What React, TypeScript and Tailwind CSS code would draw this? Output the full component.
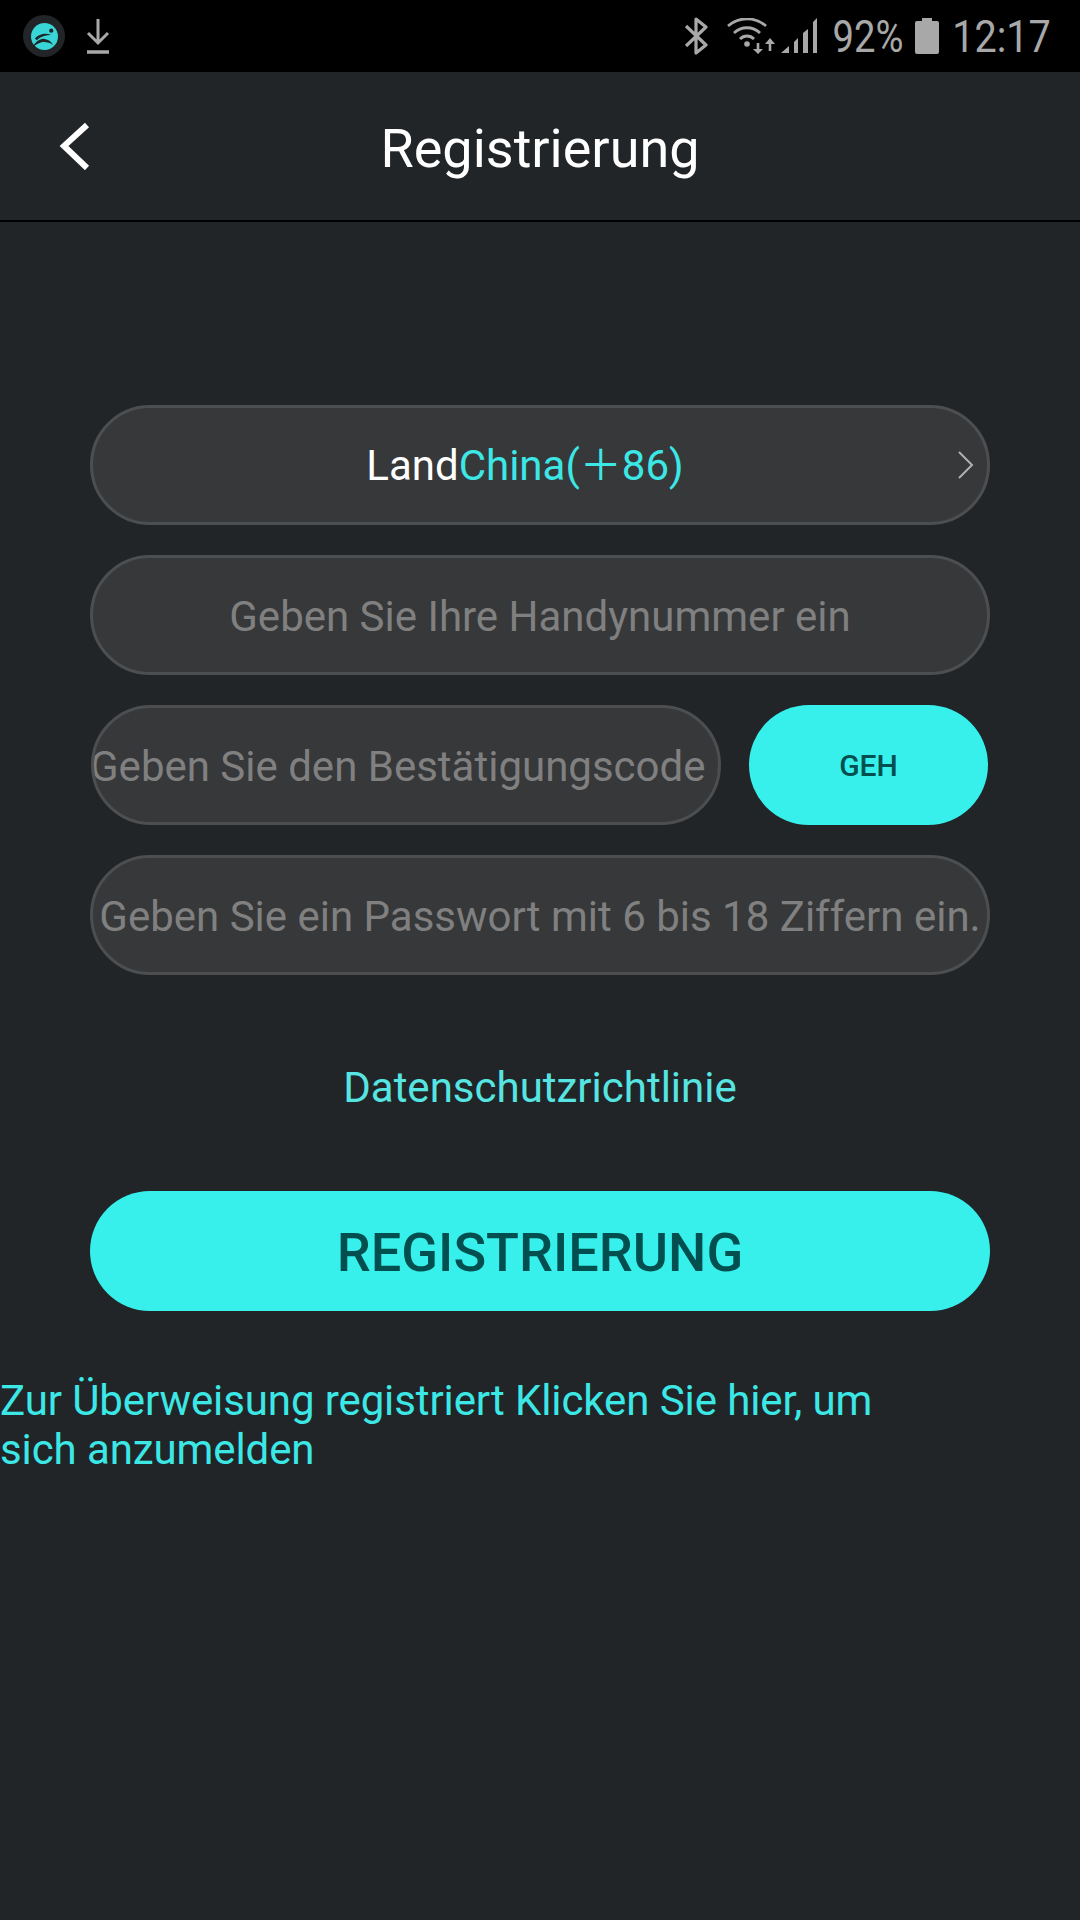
export default function App() {
  const pill = "h-[120px] rounded-[60px] border-[3px] border-[#4d4e50] bg-[#37383a] overflow-hidden flex items-center text-[42px] whitespace-nowrap pt-[3px]";
  return (
    <div className="w-[1080px] h-[1920px] bg-[#212528] flex flex-col font-['Roboto',sans-serif]">
      <div className="h-[72px] bg-black flex items-center shrink-0 text-[#a8a8a8]">
        <div className="ml-[23px] w-[42px] h-[42px] rounded-full bg-[#212528] flex items-center justify-center">
          <svg width="27" height="27" viewBox="0 0 28 28">
            <circle cx="14" cy="14" r="14" fill="#38d6d6" />
            <circle cx="21" cy="8" r="2.200" fill="#212528" />
            <path d="M4 16C9 11 15 10 21 12.500C15 12.500 10 14 6 18Z" fill="#212528" />
            <path d="M1 26C4 20 9 16 14 16.500C18 17 21 19 23 23C19 20 15 19.500 11 20C7 21 4 23 1 26Z" fill="#212528" />
          </svg>
        </div>
        <svg className="ml-[21px]" width="24" height="36" viewBox="0 0 24 36" fill="none" stroke="#a8a8a8" strokeWidth="3">
          <path d="M12 1V25M2 15L12 25L22 15" />
          <path d="M1 34H23" strokeWidth="3.5" />
        </svg>
        <div className="ml-auto flex items-center h-full">
          <svg width="24" height="40" viewBox="0 0 24 40" fill="none" stroke="#a8a8a8" strokeWidth="3.2" className="mr-[19px]">
            <path d="M2 10L22 29L12 37V3L22 11L2 30" strokeLinejoin="round" />
          </svg>
          <svg width="49" height="36" viewBox="0 0 49 36" fill="none" stroke="#a8a8a8" strokeWidth="2.8" className="mr-[5px]">
            <path d="M1 8C12 -1.500 28 -1.500 39 8M7 15C14 8 26 8 33 15M13 21C17 17 23 17 27 21" />
            <circle cx="20" cy="26" r="2.800" fill="#a8a8a8" stroke="none" />
            <path d="M31 25V32M43 33V25" strokeWidth="2.600" />
            <path d="M26 31H36L31 36ZM38 26H48L43 20Z" fill="#a8a8a8" stroke="none" />
          </svg>
          <svg width="36" height="36" viewBox="0 0 36 36" fill="#a8a8a8" className="mr-[17px]">
            <path d="M0 35L8 28V35Z" />
            <path d="M13 24L17 20V35H13Z" />
            <path d="M22 15L27 11V35H22Z" />
            <path d="M32 4L36 0V35H32Z" />
          </svg>
          <span className="w-[68px] flex justify-center whitespace-nowrap text-[45px] scale-x-[0.85] mr-[13px] pt-[1px]">92%</span>
          <svg width="24" height="36" viewBox="0 0 24 36" fill="#a8a8a8" className="mr-[15px]">
            <path d="M7 0H17V3H22A2 2 0 0 1 24 5V34A2 2 0 0 1 22 36H2A2 2 0 0 1 0 34V5A2 2 0 0 1 2 3H7Z" />
          </svg>
          <span className="w-[95px] flex justify-center whitespace-nowrap text-[45px] scale-x-[0.88] mr-[31px] pt-[1px]">12:17</span>
        </div>
      </div>

      <div className="h-[150px] shrink-0 border-b-2 border-black relative flex items-center justify-center pt-[4px]">
        <svg className="absolute left-[59px] top-[50px]" width="32" height="48" viewBox="0 0 32 48" fill="none" stroke="#ffffff" strokeWidth="6">
          <path d="M28 3L5 24L28 46" />
        </svg>
        <span className="text-white text-[54px]">Registrierung</span>
      </div>

      <div className="mt-[183px] mx-[90px] flex flex-col gap-[30px]">
        <div className={`${pill} justify-center relative pr-[30px]`}>
          <span className="leading-[60px] -mt-[1px]">
            <span className="text-white">Land</span>
            <span className="text-[#3ce8e6]">China(<span className="font-['Noto_Sans_CJK_SC'] leading-[0]">＋</span>86)</span>
          </span>
          <svg className="absolute right-[12px] top-[42px]" width="18" height="30" viewBox="0 0 18 30" fill="none" stroke="#b0b0b0" strokeWidth="2">
            <path d="M2 2L15 15L2 28" />
          </svg>
        </div>
        <div className={`${pill} justify-center text-[#808080]`}>Geben Sie Ihre Handynummer ein</div>
        <div className="flex justify-between">
          <div className={`${pill} w-[630px] ml-[1px] text-[#808080]`}><span className="-ml-[4px]">Geben Sie den Bestätigungscode ein</span></div>
          <div className="w-[239px] h-[120px] mr-[2px] rounded-[60px] bg-[#37f0ec] flex items-center justify-center text-[#034f4f] text-[30px] font-medium pt-[1px]">GEH</div>
        </div>
        <div className={`${pill} justify-center text-[#808080]`}>Geben Sie ein Passwort mit 6 bis 18 Ziffern ein.</div>
      </div>

      <div className="mt-[88px] text-center text-[#56e5e2] text-[42px] leading-[50px]">Datenschutzrichtlinie</div>

      <div className="mt-[78px] mx-[90px] h-[120px] rounded-[60px] bg-[#37f0ec] flex items-center justify-center text-[#034f4f] text-[54px] font-medium pt-[3px]">REGISTRIERUNG</div>

      <div className="mt-[65px] w-[900px] text-[#3ce8e6] text-[42px] leading-[49px] tracking-[-0.1px]">Zur Überweisung registriert Klicken Sie hier, um sich anzumelden</div>
    </div>
  );
}
